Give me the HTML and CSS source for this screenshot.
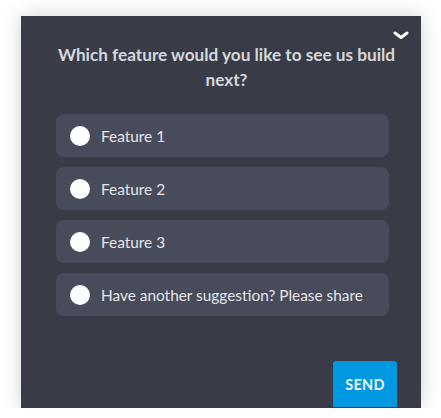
FILE: index.html
```html
<!DOCTYPE html>
<html>
<head>
<meta charset="utf-8">
<link rel="stylesheet" href="styles.css">
</head>
<body>
<div class="panel">
  <button class="collapse" aria-label="Collapse">
    <svg width="16" height="9" viewBox="0 0 16 9"><path d="M2 2 L8 6.5 L14 2" fill="none" stroke="#ffffff" stroke-width="3" stroke-linecap="round" stroke-linejoin="round"/></svg>
  </button>
  <h1 class="title">Which feature would you like to see us build next?</h1>
  <div class="options">
    <label class="option"><span class="radio"></span><span class="label">Feature 1</span></label>
    <label class="option"><span class="radio"></span><span class="label">Feature 2</span></label>
    <label class="option"><span class="radio"></span><span class="label">Feature 3</span></label>
    <label class="option"><span class="radio"></span><span class="label">Have another suggestion? Please share</span></label>
  </div>
  <div class="actions">
    <button class="send">SEND</button>
  </div>
</div>
</body>
</html>
```
FILE: styles.css
```css
html, body {
  margin: 0;
  padding: 0;
  background: #ffffff;
}
body {
  padding: 16px 0 0 21px;
  font-family: "Lato", "Noto Sans", sans-serif;
}
.panel {
  position: relative;
  width: 400px;
  height: 392px;
  box-sizing: border-box;
  background: #393c46;
  box-shadow: 0 0 18px rgba(40, 44, 60, 0.22);
  padding: 26px 32px 0 35px;
  display: flex;
  flex-direction: column;
}
.collapse {
  position: absolute;
  top: 15px;
  right: 12px;
  background: none;
  border: 0;
  padding: 0;
  width: 16px;
  height: 9px;
  display: flex;
}
.title {
  margin: 0 -12px 0 -4px;
  font-size: 17.2px;
  line-height: 25px;
  font-weight: 700;
  color: #d5d7de;
  text-align: center;
}
.options {
  margin-top: 22px;
  display: flex;
  flex-direction: column;
  gap: 10px;
}
.option {
  height: 43px;
  border-radius: 8px;
  background: #484b59;
  display: flex;
  align-items: center;
  padding-left: 14px;
}
.radio {
  width: 20px;
  height: 20px;
  border-radius: 50%;
  background: #ffffff;
  flex: none;
}
.label {
  margin-left: 11px;
  font-size: 15.4px;
  color: #e4e6eb;
}
.actions {
  margin-top: auto;
  display: flex;
  justify-content: flex-end;
  margin-right: -8px;
  margin-bottom: 1px;
}
.send {
  width: 64px;
  height: 46px;
  border: 0;
  border-radius: 3px 3px 0 0;
  background: #0098e1;
  color: #e8f4fc;
  font-family: "Lato", "Noto Sans", sans-serif;
  font-weight: 700;
  font-size: 14.5px;
  letter-spacing: 0.2px;
}
```
